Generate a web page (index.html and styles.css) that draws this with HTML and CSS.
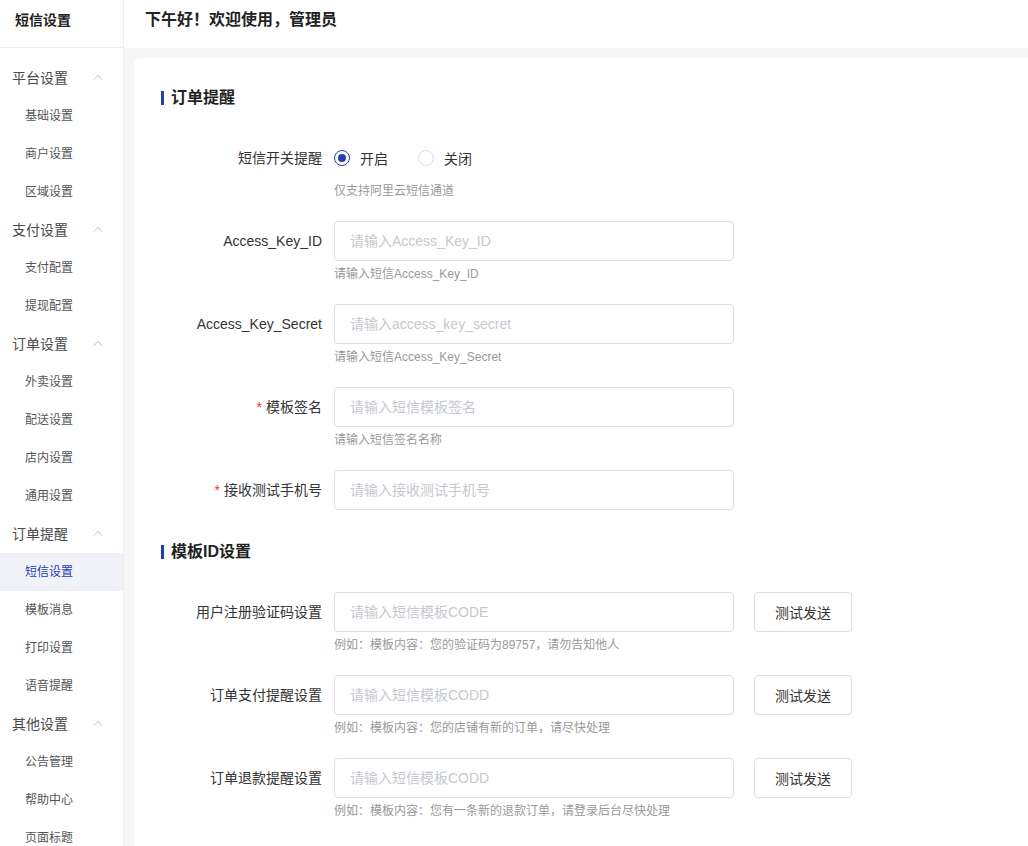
FILE: index.html
```html
<!DOCTYPE html>
<html lang="zh-CN">
<head>
    <meta charset="UTF-8">
    <meta name="viewport" content="width=device-width, initial-scale=1.0">
    <title>短信设置</title>
    <link rel="stylesheet" href="styles.css">
</head>
<body>
    <aside class="sidebar">
        <div class="sidebar-header">短信设置</div>
        <ul class="menu">
            <li class="menu-group">平台设置 <svg class="chevron" width="10" height="6" viewBox="0 0 10 6"><polyline points="1,5.5 5,1.5 9,5.5" fill="none" stroke="#bbb" stroke-width="1"/></svg></li>
            <li class="menu-item">基础设置</li>
            <li class="menu-item">商户设置</li>
            <li class="menu-item">区域设置</li>
            <li class="menu-group">支付设置 <svg class="chevron" width="10" height="6" viewBox="0 0 10 6"><polyline points="1,5.5 5,1.5 9,5.5" fill="none" stroke="#bbb" stroke-width="1"/></svg></li>
            <li class="menu-item">支付配置</li>
            <li class="menu-item">提现配置</li>
            <li class="menu-group">订单设置 <svg class="chevron" width="10" height="6" viewBox="0 0 10 6"><polyline points="1,5.5 5,1.5 9,5.5" fill="none" stroke="#bbb" stroke-width="1"/></svg></li>
            <li class="menu-item">外卖设置</li>
            <li class="menu-item">配送设置</li>
            <li class="menu-item">店内设置</li>
            <li class="menu-item">通用设置</li>
            <li class="menu-group">订单提醒 <svg class="chevron" width="10" height="6" viewBox="0 0 10 6"><polyline points="1,5.5 5,1.5 9,5.5" fill="none" stroke="#bbb" stroke-width="1"/></svg></li>
            <li class="menu-item active">短信设置</li>
            <li class="menu-item">模板消息</li>
            <li class="menu-item">打印设置</li>
            <li class="menu-item">语音提醒</li>
            <li class="menu-group">其他设置 <svg class="chevron" width="10" height="6" viewBox="0 0 10 6"><polyline points="1,5.5 5,1.5 9,5.5" fill="none" stroke="#bbb" stroke-width="1"/></svg></li>
            <li class="menu-item">公告管理</li>
            <li class="menu-item">帮助中心</li>
            <li class="menu-item">页面标题</li>
        </ul>
    </aside>

    <div class="main">
        <header class="topbar">下午好！欢迎使用，管理员</header>
        <div class="content">
            <div class="card">
                <section class="section">
                    <h3 class="section-title">订单提醒</h3>

                    <div class="form-item">
                        <label class="form-label">短信开关提醒</label>
                        <div class="form-control">
                            <div class="radio-group">
                                <label class="radio checked"><span class="radio-inner"></span>开启</label>
                                <label class="radio"><span class="radio-inner"></span>关闭</label>
                            </div>
                            <div class="form-hint">仅支持阿里云短信通道</div>
                        </div>
                    </div>

                    <div class="form-item">
                        <label class="form-label">Access_Key_ID</label>
                        <div class="form-control">
                            <input type="text" placeholder="请输入Access_Key_ID">
                            <div class="form-hint">请输入短信Access_Key_ID</div>
                        </div>
                    </div>

                    <div class="form-item">
                        <label class="form-label">Access_Key_Secret</label>
                        <div class="form-control">
                            <input type="text" placeholder="请输入access_key_secret">
                            <div class="form-hint">请输入短信Access_Key_Secret</div>
                        </div>
                    </div>

                    <div class="form-item">
                        <label class="form-label"><span class="required">*</span>模板签名</label>
                        <div class="form-control">
                            <input type="text" placeholder="请输入短信模板签名">
                            <div class="form-hint">请输入短信签名名称</div>
                        </div>
                    </div>

                    <div class="form-item">
                        <label class="form-label"><span class="required">*</span>接收测试手机号</label>
                        <div class="form-control">
                            <input type="text" placeholder="请输入接收测试手机号">
                        </div>
                    </div>
                </section>

                <section class="section section-second">
                    <h3 class="section-title">模板ID设置</h3>

                    <div class="form-item">
                        <label class="form-label">用户注册验证码设置</label>
                        <div class="form-control">
                            <div class="input-row">
                                <input type="text" placeholder="请输入短信模板CODE">
                                <button class="btn">测试发送</button>
                            </div>
                            <div class="form-hint">例如：模板内容：您的验证码为89757，请勿告知他人</div>
                        </div>
                    </div>

                    <div class="form-item">
                        <label class="form-label">订单支付提醒设置</label>
                        <div class="form-control">
                            <div class="input-row">
                                <input type="text" placeholder="请输入短信模板CODD">
                                <button class="btn">测试发送</button>
                            </div>
                            <div class="form-hint">例如：模板内容：您的店铺有新的订单，请尽快处理</div>
                        </div>
                    </div>

                    <div class="form-item">
                        <label class="form-label">订单退款提醒设置</label>
                        <div class="form-control">
                            <div class="input-row">
                                <input type="text" placeholder="请输入短信模板CODD">
                                <button class="btn">测试发送</button>
                            </div>
                            <div class="form-hint">例如：模板内容：您有一条新的退款订单，请登录后台尽快处理</div>
                        </div>
                    </div>
                </section>
            </div>
        </div>
    </div>
</body>
</html>
```

FILE: styles.css
```css
* {
    box-sizing: border-box;
}

body {
    margin: 0;
    padding: 0;
    font-family: "Liberation Sans", "Noto Sans CJK SC", sans-serif;
    font-size: 14px;
    color: #333;
    background-color: #f6f6f6;
    display: flex;
    height: 846px;
    overflow: hidden;
}

.sidebar {
    width: 124px;
    flex-shrink: 0;
    background: white;
    border-right: 1px solid #eee;
}

.sidebar-header {
    height: 48px;
    line-height: 40px;
    padding-left: 15px;
    font-size: 14px;
    font-weight: bold;
    color: #222;
    border-bottom: 1px solid #eee;
}

.menu {
    list-style: none;
    margin: 0;
    padding: 11px 0 0;
}

.menu-group,
.menu-item {
    height: 38px;
    line-height: 38px;
}

.menu-group {
    position: relative;
    padding-left: 12px;
    font-size: 14px;
    color: #4a4a4a;
}

.chevron {
    position: absolute;
    left: 93px;
    top: 15px;
}

.menu-item {
    padding-left: 25px;
    font-size: 12px;
    color: #555;
}

.menu-item.active {
    background-color: #f0f2f7;
    color: #2340b0;
}

.main {
    flex: 1;
    display: flex;
    flex-direction: column;
    min-width: 0;
}

.topbar {
    height: 48px;
    line-height: 40px;
    padding-left: 21px;
    background: white;
    font-size: 16px;
    font-weight: bold;
    color: #222;
}

.content {
    flex: 1;
    padding: 10px 0 0 10px;
}

.card {
    height: 100%;
    background: white;
    border-radius: 6px 0 0 0;
    padding: 0 27px;
}

.section {
    padding-top: 30px;
}

.section-second {
    padding-top: 11px;
}

.section-title {
    margin: 0 0 30px;
    height: 20px;
    line-height: 20px;
    font-size: 16px;
    font-weight: bold;
    color: #222;
    display: flex;
    align-items: center;
}

.section-title::before {
    content: "";
    width: 3px;
    height: 14px;
    background-color: #2340b0;
    margin-right: 7px;
}

.form-item {
    display: flex;
    margin-bottom: 21px;
}

.form-label {
    width: 161px;
    margin-right: 12px;
    height: 40px;
    line-height: 40px;
    text-align: right;
    font-size: 14px;
    color: #333;
}

.required {
    color: #ed4014;
    margin-right: 4px;
}

.form-control {
    display: flex;
    flex-direction: column;
}

.input-row {
    display: flex;
}

input {
    width: 400px;
    height: 40px;
    padding: 0 15px;
    border: 1px solid #dcdee2;
    border-radius: 4px;
    font-family: inherit;
    font-size: 14px;
    color: #333;
    outline: none;
}

input::placeholder {
    color: #c5c8ce;
}

.btn {
    width: 98px;
    height: 40px;
    margin-left: 20px;
    background: white;
    border: 1px solid #dcdee2;
    border-radius: 4px;
    font-family: inherit;
    font-size: 14px;
    color: #333;
    cursor: pointer;
}

.form-hint {
    margin-top: 4px;
    line-height: 18px;
    font-size: 12px;
    color: #999;
}

.radio-group {
    display: flex;
    height: 40px;
    align-items: center;
}

.radio {
    display: flex;
    align-items: center;
    margin-right: 30px;
    color: #333;
}

.radio-inner {
    width: 16px;
    height: 16px;
    border: 1px solid #dcdee2;
    border-radius: 50%;
    margin-right: 10px;
    display: flex;
    align-items: center;
    justify-content: center;
}

.radio.checked .radio-inner {
    border-color: #2340b0;
}

.radio.checked .radio-inner::after {
    content: "";
    width: 8px;
    height: 8px;
    border-radius: 50%;
    background-color: #2340b0;
}
```
